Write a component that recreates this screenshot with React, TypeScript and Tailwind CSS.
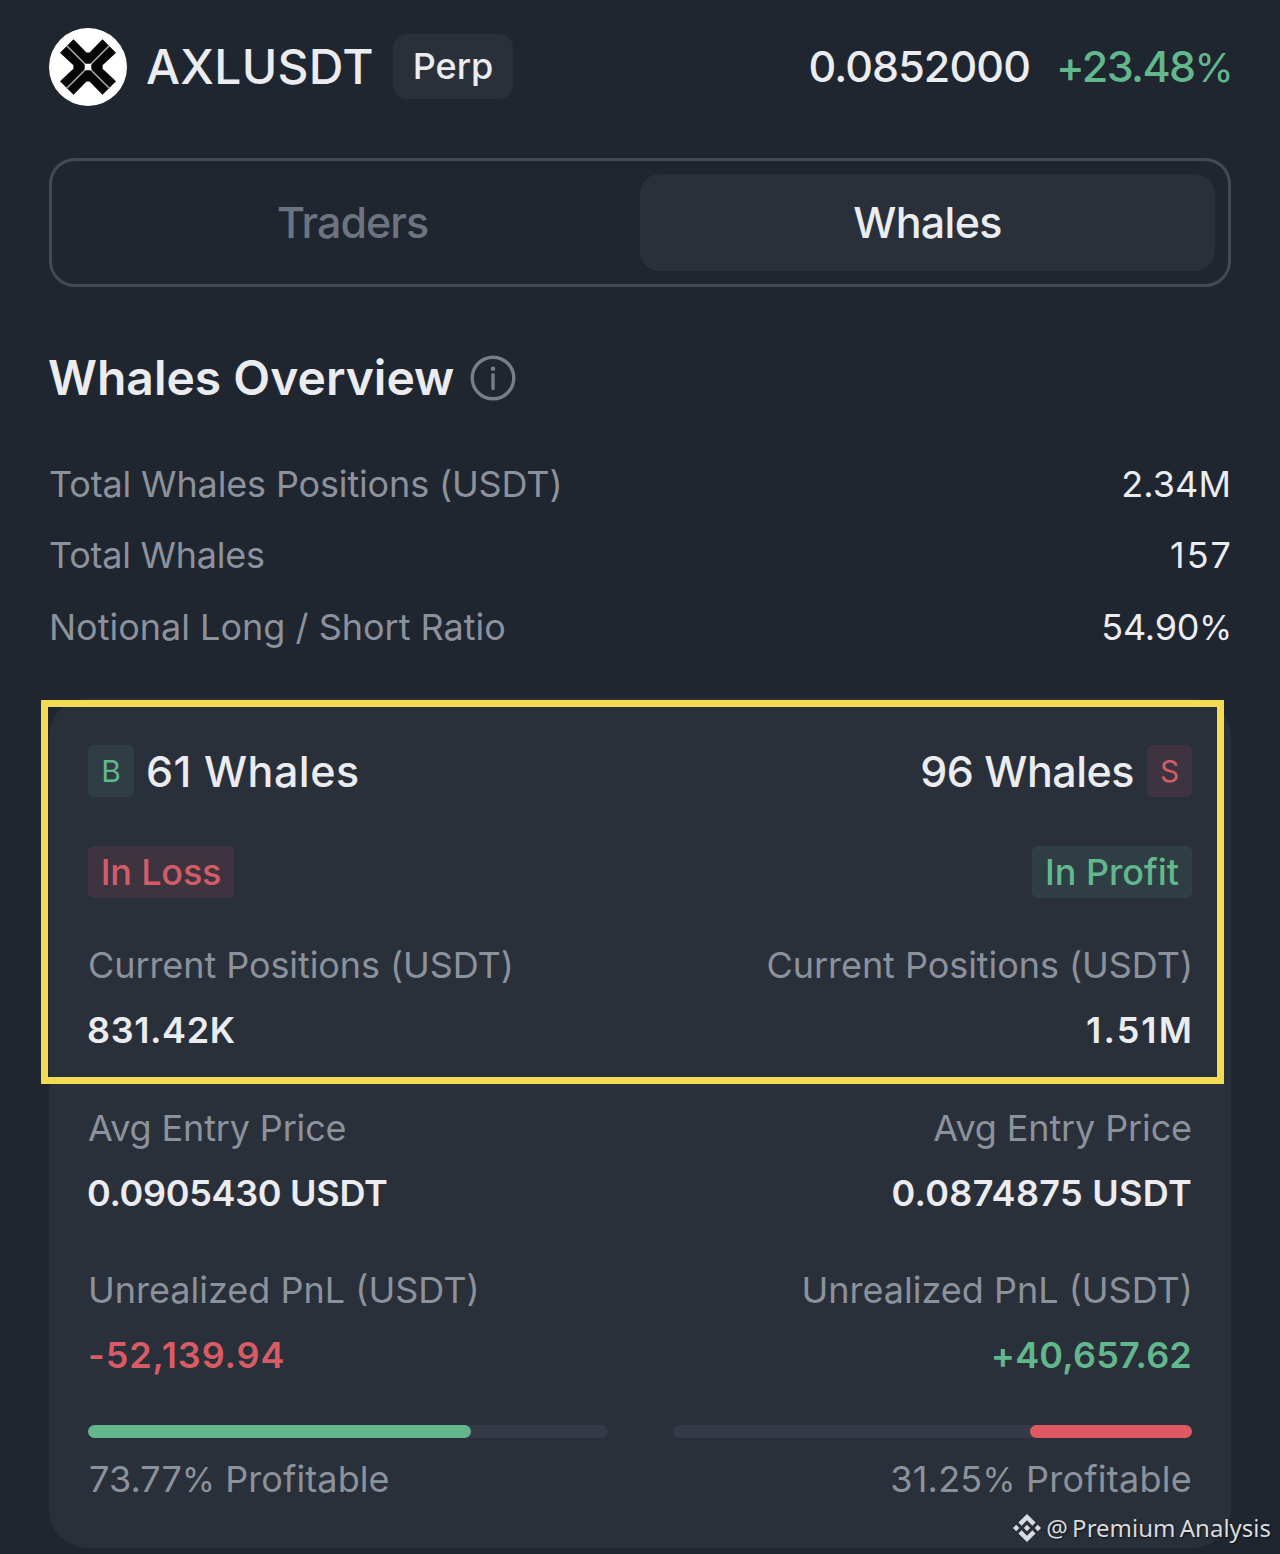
import type { ReactNode } from "react";

function AxelarLogo() {
  return (
    <svg className="size-[78px] shrink-0" viewBox="-39 -39 78 78">
      <circle r="39" fill="#fff" />
      <path
        d="M-14.5-27.8-1.5-14.4H1.5L14.5-27.8 28-14.3 14.6-1.8V1.8L28 14.3 14.5 27.8 1.5 14.4H-1.5L-14.5 27.8-28 14.3-14.6 1.8V-1.8L-28-14.3Z"
        fill="#050505"
      />
      <path d="M-21.5-21.5 21.5 21.5M21.5-21.5-21.5 21.5" stroke="#a9a9b4" strokeWidth="1.5" />
      <rect x="-3.3" y="-3.3" width="6.6" height="6.6" rx="0.8" fill="#fff" />
    </svg>
  );
}

function InfoIcon() {
  return (
    <svg className="size-[46px] shrink-0" viewBox="0 0 46 46" fill="none">
      <circle cx="23" cy="23" r="20.8" stroke="#777e89" strokeWidth="3.4" />
      <circle cx="23" cy="13.7" r="2.3" fill="#777e89" />
      <path d="M23 19.8V33.5" stroke="#777e89" strokeWidth="3.4" strokeLinecap="round" />
    </svg>
  );
}

function BinanceIcon() {
  return (
    <svg className="size-7 shrink-0" viewBox="0 0 24 24" fill="#d9dbde">
      <path d="M16.624 13.92l2.717 2.716-7.353 7.353-7.353-7.352 2.717-2.717 4.636 4.66 4.636-4.66zm4.637-4.636L24 12l-2.715 2.716L18.568 12l2.693-2.716zm-9.272 0l2.716 2.692-2.717 2.717L9.272 12l2.716-2.715zm-9.273 0L5.41 12l-2.692 2.692L0 12l2.716-2.716zM11.99.01l7.352 7.33-2.717 2.715-4.636-4.636-4.636 4.66-2.717-2.716L11.989.011z" />
    </svg>
  );
}

const Percent = () => <span className="text-[0.93em] font-normal">%</span>;

function Stat({ label, children }: { label: ReactNode; children: ReactNode }) {
  return (
    <div className="flex h-[71.5px] items-center justify-between text-[#8c929c]">
      <span>{label}</span>
      <span className="text-[#eaecf0]">{children}</span>
    </div>
  );
}

function Metric({ label, children, className }: { label: ReactNode; children: ReactNode; className: string }) {
  return (
    <div className={className}>
      <div className="flex h-[65px] items-center text-[#8c929c]">{label}</div>
      <div className="flex h-[65px] items-center font-semibold">{children}</div>
    </div>
  );
}

export default function App() {
  return (
    <div className="relative h-[1554px] w-[1280px] overflow-hidden bg-[#1f2630] px-[49px] pt-7 font-['Inter',sans-serif] text-[36px] leading-none whitespace-nowrap text-[#eaecf0]">
      <header className="flex h-[78px] items-center">
        <AxelarLogo />
        <h1 className="ml-[19px] text-[48px] font-medium tracking-[0.3px]">AXLUSDT</h1>
        <span className="mb-[2px] ml-[19px] flex h-[65px] w-[120px] items-center justify-center rounded-[14px] bg-[#2a303a] pb-px font-medium">
          Perp
        </span>
        <span className="mb-[2px] ml-auto text-[43px] font-medium tracking-[-0.9px]">0.0852000</span>
        <span className="-mr-px mb-[2px] ml-[26px] text-[43px] font-medium tracking-[-1.65px] text-[#62b78c]">
          +23.48
          <Percent />
        </span>
      </header>

      <nav className="mt-[52px] flex h-[129px] rounded-[26px] border-[3px] border-[#434a55] p-[13px] text-[43px] font-medium">
        <button className="flex flex-1 items-center justify-center tracking-[-1px] text-[#6d747f]">Traders</button>
        <button className="flex flex-1 items-center justify-center rounded-[20px] bg-[#2a303a] tracking-[-0.7px]">
          Whales
        </button>
      </nav>

      <h2 className="mt-[68px] flex h-[46px] items-center gap-4 text-[48px] font-semibold">
        <span className="-ml-px">Whales Overview</span>
        <InfoIcon />
      </h2>

      <section className="mt-[47px]">
        <Stat label={<span className="tracking-[-0.15px]">Total Whales Positions (USDT)</span>}>
          <span className="tracking-[0.1px]">2.34M</span>
        </Stat>
        <Stat label={<span className="tracking-[-0.25px]">Total Whales</span>}>
          <span className="-mr-[2px] tracking-[2px]">157</span>
        </Stat>
        <Stat label={<span>Notional Long / Short Ratio</span>}>
          <span className="-mr-px tracking-[-0.2px]">
            54.90
            <Percent />
          </span>
        </Stat>
      </section>

      <section className="relative mt-[35.5px] grid h-[850px] grid-cols-2 gap-x-[65px] rounded-[38px] bg-[#2a303a] px-[39px] pt-[47px]">
        <div className="flex flex-col items-start">
          <div className="flex h-[52px] items-center gap-3">
            <span className="flex h-[52px] w-[46px] items-center justify-center rounded-md bg-[#2f3d44] pb-px text-[30px] text-[#62b78c]">
              B
            </span>
            <span className="text-[43px] font-medium tracking-[0.5px]">61 Whales</span>
          </div>
          <div className="mt-[49px] flex h-[52px] w-[146px] items-center justify-center rounded-md bg-[#3d3440] pb-px font-medium tracking-[-0.2px] text-[#d35c69]">
            In Loss
          </div>
          <Metric
            className="mt-[34.5px]"
            label={<span className="tracking-[-0.08px]">Current Positions (USDT)</span>}
          >
            <span className="-ml-px tracking-[0.6px]">831.42K</span>
          </Metric>
          <Metric className="mt-[33px]" label={<span className="tracking-[-0.15px]">Avg Entry Price</span>}>
            <span className="-ml-px tracking-[-0.3px]">0.0905430 USDT</span>
          </Metric>
          <Metric className="mt-8" label="Unrealized PnL (USDT)">
            <span className="tracking-[0.9px] text-[#d95b66]">-52,139.94</span>
          </Metric>
          <div className="mt-[37.5px] h-[13px] w-full rounded-full bg-[#353b46]">
            <div className="h-full w-[73.77%] rounded-full bg-[#62b78c]" />
          </div>
          <div className="mt-[8.5px] flex h-[65px] items-center text-[#8c929c]">
            <span className="ml-px tracking-[0.1px]">
              73.77
              <Percent /> Profitable
            </span>
          </div>
        </div>

        <div className="flex flex-col items-end text-right">
          <div className="flex h-[52px] items-center gap-[13px]">
            <span className="text-[43px] font-medium tracking-[-0.5px]">96 Whales</span>
            <span className="flex h-[52px] w-[45px] items-center justify-center rounded-md bg-[#3d3440] pb-px text-[30px] text-[#d35c69]">
              S
            </span>
          </div>
          <div className="mt-[49px] flex h-[52px] w-40 items-center justify-center rounded-md bg-[#2f3d44] pb-px font-medium text-[#62b78c]">
            In Profit
          </div>
          <Metric
            className="mt-[34.5px] flex flex-col items-end"
            label={<span className="-mr-px tracking-[-0.05px]">Current Positions (USDT)</span>}
          >
            <span className="-mr-[2px] tracking-[2.1px]">1.51M</span>
          </Metric>
          <Metric
            className="mt-[33px] flex flex-col items-end"
            label={<span className="tracking-[-0.12px]">Avg Entry Price</span>}
          >
            <span className="tracking-[0.3px]">0.0874875 USDT</span>
          </Metric>
          <Metric
            className="mt-8 flex flex-col items-end"
            label={<span className="-mr-px">Unrealized PnL (USDT)</span>}
          >
            <span className="tracking-[0.2px] text-[#62b78c]">+40,657.62</span>
          </Metric>
          <div className="mt-[37.5px] flex h-[13px] w-full justify-end rounded-full bg-[#353b46]">
            <div className="h-full w-[31.25%] rounded-full bg-[#e05862]" />
          </div>
          <div className="mt-[8.5px] flex h-[65px] items-center text-[#8c929c]">
            <span className="tracking-[0.25px]">
              31.25
              <Percent /> Profitable
            </span>
          </div>
        </div>

        <div className="pointer-events-none absolute top-[2px] -left-2 h-[384px] w-[1183px] border-[7px] border-[#f3db53]" />
      </section>

      <div className="absolute right-[9px] bottom-[11px] flex items-center gap-[5px] font-['Noto_Sans',sans-serif] text-[24px] leading-[30px] [word-spacing:-2px] text-[#d9dbde] [text-shadow:1px_1px_2px_#000a]">
        <BinanceIcon />
        <span>@ Premium Analysis</span>
      </div>
    </div>
  );
}
